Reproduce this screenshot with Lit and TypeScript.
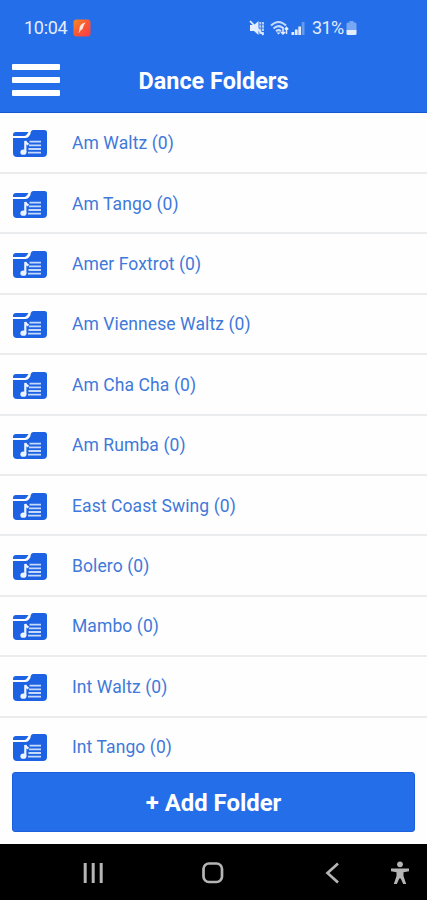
import { LitElement, html, css } from 'lit';
import { customElement, property } from 'lit/decorators.js';

const folders = [
  'Am Waltz', 'Am Tango', 'Amer Foxtrot', 'Am Viennese Waltz', 'Am Cha Cha', 'Am Rumba',
  'East Coast Swing', 'Bolero', 'Mambo', 'Int Waltz', 'Int Tango',
];

@customElement('status-bar')
class StatusBar extends LitElement {
  static styles = css`
    :host { display: flex; align-items: center; height: 56px; box-sizing: border-box; padding-left: 24px; color: #e3edff; font: 400 18px/22px Roboto, sans-serif; }
    .time { width: 45px; letter-spacing: -0.3px; }
    .app { width: 18px; height: 18px; margin-left: 4px; }
    .icons { display: flex; align-items: center; margin-left: 158px; }
    .mute { width: 16px; height: 16px; }
    .wifi { width: 19px; height: 16px; margin-left: 5px; }
    .signal { width: 15px; height: 15px; margin-left: 2px; }
    .percent { width: 33px; margin-left: 6px; letter-spacing: -0.6px; white-space: nowrap; }
    .battery { width: 11px; height: 16px; margin-left: 1px; }
  `;
  render() {
    return html`
      <span class="time">10:04</span>
      <svg class="app" viewBox="0 0 18 18">
        <defs><linearGradient id="g" x1="0" y1="0" x2="1" y2="1"><stop offset="0" stop-color="#f28b22"/><stop offset=".5" stop-color="#fb5735"/><stop offset="1" stop-color="#f83c48"/></linearGradient></defs>
        <rect x=".5" y=".5" width="17" height="17" rx="3" fill="url(#g)"/>
        <path d="M12.500 3.500C8 4.500 6.500 7 6.500 10l-1 4.500L8 11c2.500-.7 1.500-2.500 2.500-3.500-.2-1.500 1.500-2.500 2-4z" fill="#ffe8df"/>
      </svg>
      <div class="icons">
        <svg class="mute" viewBox="0 0 16 16" fill="none" stroke="#e3edff">
          <path d="M1 5h4l4.500-4v14L5 11H1z" fill="#e3edff" stroke="none"/>
          <path d="M11.300 2v12M14 2v12" stroke-width="2" stroke-dasharray="2.500 .8" opacity=".75"/>
          <path d="M1 1l13.500 14" stroke-width="1.800"/>
        </svg>
        <svg class="wifi" viewBox="0 0 19 16" fill="none" stroke="#e3edff" stroke-width="2">
          <path d="M1 5.500Q8.500-1.500 16 5.500M3.500 8.500Q8.500 4 13 8M6 11.300Q8.500 9 11 11.300" opacity=".85"/>
          <path d="M8.500 14.500l-2-2h4z" fill="#e3edff" stroke="none"/>
          <path d="M13 7v7M11 12l2 2 2-2M16.500 14V7.500M14.800 9.500l1.700-2 1.700 2" stroke-width="1.500"/>
        </svg>
        <svg class="signal" viewBox="0 0 15 15" fill="#e3edff">
          <path d="M.5 11h2.700v3H.5zM3.900 8.500h2.700V14H3.900zM7.300 5.500H10V14H7.300z"/><path d="M10.700 1h2.800v13h-2.800z" opacity=".35"/>
        </svg>
        <span class="percent">31%</span>
        <svg class="battery" viewBox="0 0 11 16" fill="#e3edff">
          <path d="M3.500 1h4v1.500h1.500q1.500 0 1.500 1.500V10H.5V4q0-1.500 1.500-1.500h1.500z" opacity=".45"/><path d="M.5 10h10v3.500q0 1.500-1.500 1.500H2Q.5 15 .5 13.500z"/>
        </svg>
      </div>`;
  }
}

@customElement('folder-row')
class FolderRow extends LitElement {
  @property() name = '';
  static styles = css`
    :host { display: flex; align-items: center; flex: none; height: 60.400px; box-sizing: border-box; border-bottom: 2px solid #ebecee; padding-left: 12px; color: #3f79da; font: 400 17.500px/24px Roboto, sans-serif; }
    .icon { width: 36px; height: 30px; margin: 3px 24px 0 0; flex: none; }
    .label { letter-spacing: 0.090px; white-space: pre; padding-top: 1px; }
  `;
  render() {
    return html`
      <svg class="icon" viewBox="0 0 36 30">
        <path d="M1 9h12.500q2.500 0 3.700-2l1.300-2V4q.5-3 3-3h11q2.500 0 2.500 2.500V24q0 4-4 4H5q-4 0-4-4z" fill="#1d62e2"/>
        <path d="M1 7V6q0-3 3-3h12.500L15 5.200Q14 7 12.500 7z" fill="#1d62e2"/>
        <path d="M17.500 12.600h11.500M17 16.400h12M16.500 20h12.500M16 23.700h13" fill="none" stroke="#c5d9fb" stroke-width="1.800"/>
        <path d="M13.300 23V12q.6 2.200 3.200 3.500" fill="none" stroke="#eef4ff" stroke-width="2.200"/>
        <ellipse cx="11.400" cy="23.200" rx="3" ry="2.600" fill="#eef4ff"/>
      </svg>
      <span class="label">${this.name} (0)</span>`;
  }
}

@customElement('nav-bar')
class NavBar extends LitElement {
  static styles = css`
    :host { display: flex; flex: none; align-items: center; height: 56px; background: #000; }
    svg { height: 24px; width: 24px; fill: none; stroke: #b5b5b5; stroke-width: 2.700; }
    .recent { margin-left: 81px; }
    .home { margin-left: 96px; }
    .back { margin-left: 96px; }
    .person { margin-left: 43px; }
  `;
  render() {
    return html`
      <svg class="recent" viewBox="0 0 24 24"><path d="M4.200 3v20M12.200 3v20M20.200 3v20" stroke-width="3"/></svg>
      <svg class="home" viewBox="0 0 24 24"><rect x="2.500" y="3.500" width="18.500" height="18.500" rx="5.500"/></svg>
      <svg class="back" viewBox="0 0 24 24"><path d="M17 3.500L6.500 13 17 22.500"/></svg>
      <svg class="person" viewBox="0 0 24 24"><circle cx="12" cy="4.300" r="2.900" fill="#b5b5b5" stroke="none"/><path d="M3 8.500h18v2.800l-5.500.9v3.800l2.700 8h-3L12.700 18.500h-1.400L8.800 24h-3L8.500 16v-3.800L3 11.300z" fill="#b5b5b5" stroke="none"/></svg>`;
  }
}

@customElement('app-root')
class AppRoot extends LitElement {
  static styles = css`
    :host { display: flex; flex-direction: column; height: 900px; overflow: hidden; background: #fefefe; font-family: Roboto, sans-serif; }
    .top { flex: none; height: 113px; box-sizing: border-box; background: #246eea; border-bottom: 1.500px solid #1558d2; }
    .bar { display: grid; grid-template-columns: 60px 1fr 60px; align-items: center; height: 50px; }
    .menu { display: flex; flex-direction: column; gap: 7px; margin-left: 12px; margin-top: -2px; }
    .line { height: 6px; background: #fff; border-radius: 1px; }
    h1 { margin: 0; text-align: center; color: #fff; font: 700 23.400px/30px Roboto, sans-serif; white-space: nowrap; }
    .list { flex: 1; min-height: 0; overflow: hidden; display: flex; flex-direction: column; padding-top: 0.600px; }
    .footer { flex: none; height: 72px; box-sizing: border-box; padding: 0 12px 12px; display: flex; }
    button { flex: 1; border: 1px solid #1a60dc; border-radius: 3px; background: #246eea; color: #fff; padding: 2px 0 0; font: 700 23.900px/30px Roboto, sans-serif; }
  `;
  render() {
    return html`
      <div class="top">
        <status-bar></status-bar>
        <div class="bar">
          <div class="menu"><div class="line"></div><div class="line"></div><div class="line"></div></div>
          <h1>Dance Folders</h1>
        </div>
      </div>
      <div class="list">${folders.map((f) => html`<folder-row .name=${f}></folder-row>`)}</div>
      <div class="footer"><button>+ Add Folder</button></div>
      <nav-bar></nav-bar>`;
  }
}
